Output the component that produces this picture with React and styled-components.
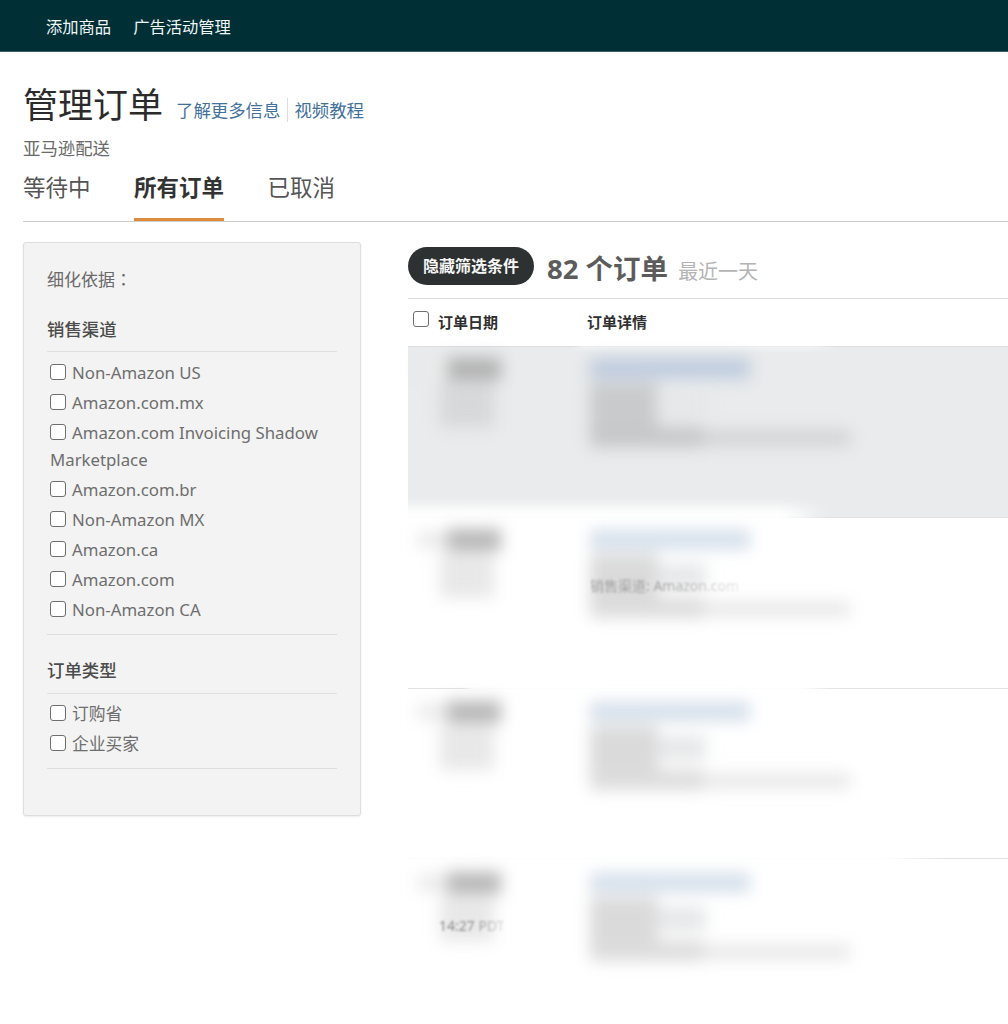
import React from "react";
import styled, { createGlobalStyle } from "styled-components";

const Global = createGlobalStyle`
  html, body { margin: 0; padding: 0; background: #fff; }
  body { font-family: "Noto Sans", "Noto Sans CJK SC", sans-serif; overflow: hidden; }
  * { box-sizing: border-box; }
`;

const Page = styled.div`
  width: 1008px;
  height: 1024px;
  overflow: hidden;
  display: flex;
  flex-direction: column;
`;
const TopBar = styled.nav`
  height: 52px;
  flex: none;
  background: #002f36;
  border-bottom: 1px solid #3d6267;
  display: flex;
  align-items: center;
  gap: 22px;
  padding: 2px 0 0 46px;
`;
const TopLink = styled.a`
  color: #f1f6f6;
  font-size: 16.3px;
  line-height: 20px;
`;
const Header = styled.header`
  padding: 27px 0 0 23px;
  flex: none;
`;
const TitleRow = styled.div`
  display: flex;
  align-items: flex-end;
  height: 52px;
`;
const Title = styled.h1`
  margin: 0 13px 0 0;
  font-size: 35px;
  line-height: 52px;
  font-weight: 400;
  color: #2b2b2b;
`;
const HelpLink = styled.a`
  font-size: 17.4px;
  line-height: 24px;
  color: #44719c;
  margin-bottom: 9px;
  padding-right: ${(p) => (p.$divided ? "7px" : "0")};
  margin-right: ${(p) => (p.$divided ? "6px" : "0")};
  border-right: ${(p) => (p.$divided ? "1px solid #ddd" : "none")};
`;
const SubTitle = styled.div`
  font-size: 17.4px;
  line-height: 24px;
  color: #6a6a6a;
  margin-top: 5px;
`;
const Tabs = styled.div`
  display: flex;
  gap: 43.5px;
  height: 61px;
  margin-top: 1px;
  border-bottom: 1px solid #ccc;
`;
const Tab = styled.a`
  font-size: 22.5px;
  line-height: 30px;
  padding-top: 12px;
  height: 60px;
  font-weight: ${(p) => (p.$active ? 700 : 400)};
  color: ${(p) => (p.$active ? "#333" : "#555")};
  border-bottom: ${(p) => (p.$active ? "3px solid #e08a3c" : "none")};
`;
const Body = styled.div`
  flex: 1;
  display: flex;
  align-items: flex-start;
  gap: 47px;
  padding: 20px 0 0 23px;
  min-height: 0;
`;
const Sidebar = styled.aside`
  width: 338px;
  height: 574px;
  flex: none;
  background: #f3f3f3;
  border: 1px solid #dedede;
  border-radius: 3px;
  box-shadow: 0 1px 2px rgba(0, 0, 0, 0.08);
  padding: 24px 23px 0 23px;
`;
const RefineLabel = styled.div`
  font-size: 17px;
  line-height: 24px;
  color: #6a6a6a;
  margin-bottom: 25px;
`;
const WideColon = styled.span`
  font-family: "Noto Sans CJK TC", sans-serif;
`;
const GroupTitle = styled.div`
  font-size: 17.4px;
  line-height: 24px;
  font-weight: 500;
  color: #4c4c4c;
  padding-bottom: ${(p) => p.$pad}px;
  border-bottom: 1px solid #e0e0e0;
`;
const OptionList = styled.div`
  padding: ${(p) => p.$top}px 0 ${(p) => p.$bottom}px 3px;
  border-bottom: 1px solid #ddd;
  margin-bottom: ${(p) => p.$gap || 0}px;
`;
const Option = styled.label`
  display: block;
  font-size: 16.8px;
  line-height: 27px;
  padding: 1.5px 0;
  color: #6e6e6e;
`;
const Check = styled.input.attrs({ type: "checkbox" })`
  appearance: none;
  width: 16px;
  height: 16px;
  margin: 0 6px 0 0;
  display: inline-block;
  vertical-align: -1px;
  background: #fff;
  border: 1.3px solid #6f6f6f;
  border-radius: 3px;
`;
const Main = styled.main`
  flex: 1;
  min-width: 0;
`;
const Summary = styled.div`
  display: flex;
  align-items: center;
  height: 57px;
  padding: 5px 0 0;
  border-bottom: 1px solid #ddd;
`;
const FilterButton = styled.button`
  width: 126px;
  height: 38px;
  margin-top: -14px;
  border: 0;
  border-radius: 19px;
  background: #2e3131;
  color: #f6f6f6;
  font: 700 16px/20px "Noto Sans", "Noto Sans CJK SC", sans-serif;
  padding: 0;
`;
const Count = styled.div`
  font-size: 27.5px;
  line-height: 36px;
  font-weight: 700;
  color: #5c5c5c;
  margin: -7px 10px 0 13px;
`;
const Period = styled.div`
  font-size: 20px;
  line-height: 28px;
  color: #b4b4b4;
  margin-top: -2px;
`;
const ColumnHead = styled.div`
  display: grid;
  grid-template-columns: 179px 1fr;
  height: 48px;
  align-items: center;
  padding-bottom: 3px;
  border-bottom: 1px solid #ddd;
  font-size: 15px;
  font-weight: 700;
  color: #2f2f2f;
  position: relative;
`;
const DateHead = styled.div`
  padding-left: 5px;
  display: flex;
  align-items: center;
`;
const HeadCheck = styled(Check)`
  margin: -4px 9px 0 0;
`;
const Row = styled.div`
  position: relative;
  height: ${(p) => p.$height}px;
  background: ${(p) => (p.$shaded ? "#e9ebec" : "#fff")};
  border-bottom: 1px solid #e2e2e2;
  padding-left: 32px;
  display: grid;
  grid-template-columns: 150px 1fr;
`;
const Halo = styled.div`
  position: absolute;
  left: ${(p) => p.$left}px;
  top: ${(p) => p.$top}px;
  width: ${(p) => p.$width}px;
  height: ${(p) => p.$h}px;
  background: linear-gradient(to right, #fff 90%, rgba(255, 255, 255, 0));
  filter: blur(${(p) => p.$blur || 6}px);
`;
const Column = styled.div`
  position: relative;
  filter: blur(8px);
`;
const Smear = styled.div`
  position: absolute;
  left: ${(p) => p.$x}px;
  top: ${(p) => p.$y}px;
  width: ${(p) => p.$w}px;
  height: ${(p) => p.$h}px;
  background: ${(p) => p.$color};
`;
const Ghost = styled.div`
  position: absolute;
  left: ${(p) => p.$x}px;
  top: ${(p) => p.$y}px;
  font-size: 14px;
  line-height: 18px;
  white-space: nowrap;
  color: ${(p) => p.$color};
  filter: blur(0.8px);
  mask-image: linear-gradient(to right, #000 45%, rgba(0, 0, 0, 0.25) 100%);
`;

const channels = [
  "Non-Amazon US",
  "Amazon.com.mx",
  "Amazon.com Invoicing Shadow Marketplace",
  "Amazon.com.br",
  "Non-Amazon MX",
  "Amazon.ca",
  "Amazon.com",
  "Non-Amazon CA",
];
const orderTypes = ["订购省", "企业买家"];

const palettes = {
  strong: { date: "#b0b0b0", dateSub: "#d6d8d9", link: "#bccadd", info: "#c8cacb", foot: "#c6c7c8", tail: "#d0d1d2" },
  soft: { date: "#b6b6b6", dateSub: "#e8e8e8", link: "#d4dfea", info: "#dadada", foot: "#dcdcdc", tail: "#e6e6e6" },
};

function OrderRow({ height, shaded, palette, halos, channel, time, dy = 0 }) {
  const c = palettes[palette];
  return (
    <Row $height={height} $shaded={shaded}>
      {halos.map((h, i) => (
        <Halo key={i} $left={h.left} $top={h.top} $width={h.width} $h={h.h} $blur={h.blur} />
      ))}
      <Column>
        <Smear $x={6} $y={11 + dy} $w={55} $h={22} $color={c.date} />
        <Smear $x={0} $y={36 + dy} $w={54} $h={44} $color={c.dateSub} />
        <Smear $x={-22} $y={14 + dy} $w={30} $h={16} $color="#eaeaea" />
      </Column>
      {time && <Ghost $x={31} $y={58} $color="#8e8e8e">14:27 PDT</Ghost>}
      <Column>
        <Smear $x={0} $y={12 + dy} $w={160} $h={19} $color={c.link} />
        <Smear $x={0} $y={36 + dy} $w={68} $h={48} $color={c.info} />
        <Smear $x={66} $y={46 + dy} $w={50} $h={24} $color="#e6e7e8" />
        <Smear $x={0} $y={80 + dy} $w={114} $h={20} $color={c.foot} />
        <Smear $x={112} $y={84 + dy} $w={148} $h={14} $color={c.tail} />
      </Column>
      {channel && <Ghost $x={182} $y={59} $color="#a4a4a4">销售渠道: Amazon.com</Ghost>}
    </Row>
  );
}

export default function App() {
  return (
    <Page>
      <Global />
      <TopBar>
        <TopLink>添加商品</TopLink>
        <TopLink>广告活动管理</TopLink>
      </TopBar>
      <Header>
        <TitleRow>
          <Title>管理订单</Title>
          <HelpLink $divided>了解更多信息</HelpLink>
          <HelpLink>视频教程</HelpLink>
        </TitleRow>
        <SubTitle>亚马逊配送</SubTitle>
        <Tabs>
          <Tab>等待中</Tab>
          <Tab $active>所有订单</Tab>
          <Tab>已取消</Tab>
        </Tabs>
      </Header>
      <Body>
        <Sidebar>
          <RefineLabel>
            细化依据<WideColon>：</WideColon>
          </RefineLabel>
          <GroupTitle $pad={10}>销售渠道</GroupTitle>
          <OptionList $top={5} $bottom={10} $gap={23}>
            {channels.map((name) => (
              <Option key={name}>
                <Check />
                {name}
              </Option>
            ))}
          </OptionList>
          <GroupTitle $pad={11}>订单类型</GroupTitle>
          <OptionList $top={4} $bottom={10}>
            {orderTypes.map((name) => (
              <Option key={name}>
                <Check />
                {name}
              </Option>
            ))}
          </OptionList>
        </Sidebar>
        <Main>
          <Summary>
            <FilterButton>隐藏筛选条件</FilterButton>
            <Count>82 个订单</Count>
            <Period>最近一天</Period>
          </Summary>
          <ColumnHead>
            <DateHead>
              <HeadCheck />
              订单日期
            </DateHead>
            <div>订单详情</div>
          </ColumnHead>
          <OrderRow
            height={171}
            shaded
            palette="strong"
            halos={[{ left: 170, top: -12, width: 260, h: 11, blur: 5 }]}
          />
          <OrderRow
            height={171}
            palette="soft"
            channel
            halos={[{ left: -20, top: -12, width: 440, h: 20, blur: 6 }]}
          />
          <OrderRow
            height={170}
            palette="soft"
            dy={1}
            halos={[{ left: 60, top: -8, width: 370, h: 14, blur: 4 }]}
          />
          <OrderRow
            height={166}
            palette="soft"
            dy={2}
            time
            halos={[{ left: -4, top: -8, width: 540, h: 14, blur: 4 }]}
          />
        </Main>
      </Body>
    </Page>
  );
}
